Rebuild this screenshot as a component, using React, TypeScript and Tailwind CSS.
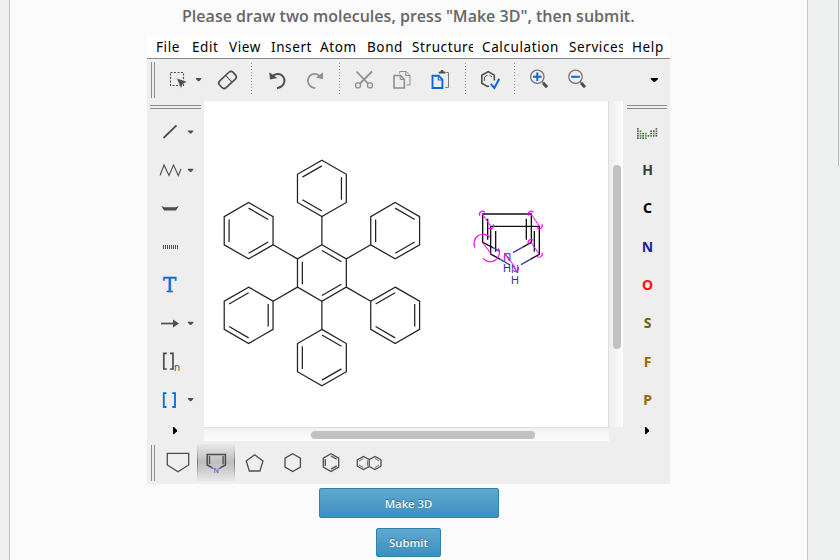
import React from "react";

type Pt = [number, number];

/** Drawing surface whose user units are window coordinates. */
function Art({ x, y, w, h, children }: { x: number; y: number; w: number; h: number; children?: React.ReactNode }) {
  return (
    <svg width={w} height={h} viewBox={`${x} ${y} ${w} ${h}`} className="block shrink-0" fill="none" stroke="#4d4d4d" strokeWidth="1.3">
      {children}
    </svg>
  );
}

const Tool = ({ x, w, children }: { x: number; w: number; children?: React.ReactNode }) => (
  <Art x={x} y={59} w={w} h={42}>{children}</Art>
);

const Separator = ({ x, w, at }: { x: number; w: number; at: number }) => (
  <Tool x={x} w={w}>
    <path d={`M${at + 0.5} 63V95`} stroke="#8d8d8d" strokeWidth="1" strokeDasharray="1 2" />
  </Tool>
);

const Caret = ({ x, y }: { x: number; y: number }) => (
  <path d={`M${x - 2.7} ${y - 1.6}h5.4v1l-2.1 2.2h-1.2l-2.1-2.2z`} fill="#3f5573" stroke="none" />
);

const menus: { label: string; cell: string }[] = [
  { label: "File", cell: "w-[36px]" },
  { label: "Edit", cell: "w-[37px]" },
  { label: "View", cell: "w-[42px]" },
  { label: "Insert", cell: "w-[49px]" },
  { label: "Atom", cell: "w-[47px]" },
  { label: "Bond", cell: "w-[45px]" },
  { label: "Structure", cell: "w-[61px] mr-[9px]" },
  { label: "Calculation", cell: "w-[87px]" },
  { label: "Services", cell: "w-[54px] mr-[9px]" },
  { label: "Help", cell: "w-[36px]" },
];

const elements = [
  { symbol: "H", color: "text-[#3a3a3a]" },
  { symbol: "C", color: "text-black" },
  { symbol: "N", color: "text-[#2222a0]" },
  { symbol: "O", color: "text-[#ff0d0d]" },
  { symbol: "S", color: "text-[#676700]" },
  { symbol: "F", color: "text-[#996600]" },
  { symbol: "P", color: "text-[#996600]" },
];

function hexagon(cx: number, cy: number, r: number): Pt[] {
  return [0, 1, 2, 3, 4, 5].map((i) => {
    const a = (i * Math.PI) / 3;
    return [cx + r * Math.sin(a), cy - r * Math.cos(a)] as Pt;
  });
}

function Ring({ cx, cy, r = 28.2, doubles, inset = 0.2 }: { cx: number; cy: number; r?: number; doubles: number[]; inset?: number }) {
  const outer = hexagon(cx, cy, r);
  const inner = hexagon(cx, cy, r * (1 - inset));
  return (
    <g>
      <polygon points={outer.map((p) => p.join(",")).join(" ")} />
      {doubles.map((i) => {
        const a = inner[i];
        const b = inner[(i + 1) % 6];
        return <line key={i} x1={a[0]} y1={a[1]} x2={b[0]} y2={b[1]} />;
      })}
    </g>
  );
}

function HexaphenylBenzene() {
  const c: Pt = [321.9, 273];
  const near = hexagon(c[0], c[1], 28.2);
  const far = hexagon(c[0], c[1], 56.4);
  const centers = hexagon(c[0], c[1], 84.6);
  const doubles = [[5, 1, 3], [0, 2, 4], [5, 1, 3], [0, 2, 4], [5, 1, 3], [0, 2, 4]];
  return (
    <g stroke="#222" strokeWidth="1.25">
      <Ring cx={c[0]} cy={c[1]} doubles={[0, 2, 4]} />
      {centers.map((p, i) => (
        <g key={i}>
          <Ring cx={p[0]} cy={p[1]} doubles={doubles[i]} />
          <line x1={near[i][0]} y1={near[i][1]} x2={far[i][0]} y2={far[i][1]} />
        </g>
      ))}
    </g>
  );
}

/** Half circles around two paired atoms, joined by a dotted link. */
function AtomPair({ a, b, r = 9 }: { a: Pt; b: Pt; r?: number }) {
  const dx = r * 0.83;
  const dy = r * 0.55;
  return (
    <g>
      <path d={`M${a[0] - dx} ${a[1] + dy}A${r} ${r} 0 0 1 ${a[0] + dx} ${a[1] - dy}`} />
      <path d={`M${b[0] - dx} ${b[1] + dy}A${r} ${r} 0 0 0 ${b[0] + dx} ${b[1] - dy}`} />
      <path d={`M${a[0]} ${a[1]}L${b[0]} ${b[1]}`} strokeDasharray="7 1.5" />
    </g>
  );
}

function OverlappingPyrroles() {
  return (
    <g transform="translate(465 200) scale(0.33333)" strokeWidth="4">
      <g stroke="#111">
        <path d="M84 143L53 127V42H199V127L172 142M68 56V119M184 56V119" />
        <path d="M106 178L77 162V79H223V163L196 178M92 93V155M208 93V155" />
      </g>
      <g stroke="#3b3ba8">
        <path d="M84 143L104 154M172 142L144 158M106 178L135 195M196 178L168 194" />
      </g>
      <g fill="#3030a2" stroke="none" fontFamily="Liberation Sans, Arial, sans-serif" fontSize="33">
        <text x="115" y="182">N</text>
        <text x="114" y="217">H</text>
        <text x="138" y="220">N</text>
        <text x="138" y="252">H</text>
      </g>
      <g stroke="#f0f" strokeWidth="3.4">
        <AtomPair a={[52, 42]} b={[77, 78]} />
        <AtomPair a={[198, 42]} b={[223, 78]} />
        <AtomPair a={[198, 127]} b={[223, 163]} />
        <AtomPair a={[127, 169]} b={[152, 206]} />
        <AtomPair a={[53, 128]} b={[77, 160]} r={27.5} />
      </g>
    </g>
  );
}

function TopToolbar() {
  return (
    <div className="flex h-[42px]">
      <Tool x={147} w={13}><path d="M151.5 62V98M154.5 62V98" stroke="#8c8c8c" strokeWidth="1" /></Tool>
      <Tool x={160} w={50}>
        <path d="M170.5 72.5H183.5V85.5H170.5Z" strokeDasharray="2 1.5" strokeWidth="1.1" />
        <path d="M176.7 78.2L187 81.8L182.8 83.9L181 88.6Z" fill="#4d4d4d" stroke="#eee" strokeWidth=".4" />
        <Caret x={198.6} y={79.6} />
      </Tool>
      <Tool x={210} w={35}>
        <g transform="rotate(-43 227.5 80)" strokeWidth="1.6">
          <rect x="218.3" y="75.3" width="18.5" height="9.4" rx="3" />
          <path d="M229.3 75.5V84.5" strokeWidth="1" />
        </g>
      </Tool>
      <Separator x={245} w={15} at={251} />
      <Tool x={260} w={37}>
        <path d="M272 76.5C275 73.2 280.5 73 283 76.5C286.5 81.5 283.3 87 277 88.2" strokeWidth="2" />
        <path d="M269.3 72.3L270 79.5L277.3 78Z" fill="#4d4d4d" stroke="none" />
      </Tool>
      <Tool x={297} w={36}>
        <path d="M320.3 76.5C317.3 73.2 311.8 73 309.3 76.5C306 81.5 309 87 315.3 88.2" stroke="#8f8f8f" strokeWidth="1.7" />
        <path d="M323 72.3L323 79.3L316 77.6Z" fill="#8f8f8f" stroke="none" />
      </Tool>
      <Separator x={333} w={13} at={339} />
      <Tool x={346} w={37}>
        <g stroke="#8f8f8f">
          <path d="M356.5 71.5L368 83.5M372 71.5L360 83.5" strokeWidth="1.8" />
          <circle cx="358" cy="85.4" r="2.5" />
          <circle cx="370" cy="85.4" r="2.5" />
        </g>
      </Tool>
      <Tool x={383} w={38}>
        <g stroke="#8f8f8f">
          <path d="M394 75.5H400.5L404.3 79.3V88H394Z" strokeWidth="1.6" />
          <path d="M400.2 75V79.5H404.5M399.6 73.6V71.5H406L410 75.3V85H406.4M405.7 71.5V75.5H410" strokeWidth="1" />
        </g>
      </Tool>
      <Tool x={421} w={38}>
        <path d="M446.2 72.5H448.5V87.5H445.3" stroke="#777" strokeWidth="1" />
        <path d="M438.7 73.5V71.7H440.4C440.6 69.5 443.6 69.5 443.8 71.7H445.5V73.5Z" fill="#4d4d4d" stroke="none" />
        <path d="M432.5 75.7H438.7L442.4 79.7V88H432.5Z" stroke="#0b68dc" strokeWidth="1.9" />
        <path d="M438.3 76V80H442.3" stroke="#0b68dc" strokeWidth="1.1" />
      </Tool>
      <Separator x={459} w={13} at={465} />
      <Tool x={472} w={36}>
        <path d="M489 86L487.5 86.4L481.8 83.3V75.2L488.2 71.6L494.3 75.1V80.5" strokeWidth="1.6" />
        <path d="M484.4 81V77L487.6 75.1M489.4 75.2L492 77" strokeWidth="1" />
        <path d="M490.8 84L494.4 88L499.2 78.8" stroke="#0b68dc" strokeWidth="2" />
      </Tool>
      <Separator x={508} w={12} at={514} />
      <Tool x={520} w={38}>
        <circle cx="537.3" cy="76.8" r="6.7" stroke="#777" />
        <path d="M533 76.8H541.6M537.3 72.5V81.1" stroke="#0b68dc" strokeWidth="2" />
        <path d="M542.5 82L543.5 83" /><path d="M543.2 83L547 87.2" strokeWidth="3" />
      </Tool>
      <Tool x={558} w={39}>
        <circle cx="575.5" cy="76.8" r="6.7" stroke="#777" />
        <path d="M571.2 76.8H579.8" stroke="#0b68dc" strokeWidth="2" />
        <path d="M580.5 82L581.5 83" /><path d="M581.2 83L585 87.2" strokeWidth="3" />
      </Tool>
      <Tool x={597} w={73}><path d="M650.8 78H658V79L655 82H653.8L650.8 79Z" fill="#000" stroke="none" /></Tool>
    </div>
  );
}

function LeftTools() {
  return (
    <div className="flex w-[57px] flex-col bg-[#eeeeee]">
      <Art x={147} y={101} w={57} h={11}><path d="M150 105.5H201M150 108.5H201" stroke="#8c8c8c" strokeWidth="1" /></Art>
      <Art x={147} y={112} w={57} h={39}><path d="M163.5 138L176.5 125.3" strokeWidth="1.8" /><Caret x={190.6} y={132} /></Art>
      <Art x={147} y={151} w={57} h={38}><path d="M160 175.5L164 165L169 175.5L173.5 165L178.3 175.5L181 169" strokeWidth="1.1" /><Caret x={190.6} y={170.3} /></Art>
      <Art x={147} y={189} w={57} h={38}><path d="M161.3 206L164.5 207.3H175.5L178.8 206L176 210.5H164Z" fill="#4d4d4d" stroke="none" /></Art>
      <Art x={147} y={227} w={57} h={39}><path d="M163 247H178.2" strokeWidth="4" strokeDasharray="1 1" /></Art>
      <div className="flex h-[38px] items-center pl-[16px] font-['DejaVu_Serif',serif] text-[20px] leading-none text-[#0b68dc] [-webkit-text-stroke:0.4px_#0b68dc]"><span className="h-[20px] w-[14px] leading-[21px]">T</span></div>
      <Art x={147} y={304} w={57} h={38}><path d="M161 323.5H174" strokeWidth="1.7" /><path d="M173 319.5L179 323.5L173 327.5Z" fill="#4d4d4d" stroke="none" /><Caret x={190.6} y={323.3} /></Art>
      <Art x={147} y={342} w={57} h={39}>
        <path d="M166.8 353.3H163.8V369H166.8M170 353.3H173V369H170" strokeWidth="1.7" />
        <text x="174" y="371" fill="#4d4d4d" stroke="none" fontSize="10" fontFamily="Open Sans, sans-serif">n</text>
      </Art>
      <Art x={147} y={381} w={57} h={38}><path d="M166.5 393.2H163.8V407H166.5M172.3 393.2H175V407H172.3" stroke="#0b68dc" strokeWidth="1.8" /><Caret x={190.6} y={399.7} /></Art>
      <Art x={147} y={419} w={57} h={22}><path d="M173 427V434.2H174L177 431.2V430L174 427Z" fill="#000" stroke="none" /></Art>
    </div>
  );
}

// Dot matrix of the periodic table: 1 is a dark cell, 2 a green one.
const periodicDots = ["1......1", "12...112", "1212.121", "12121211", "1112...."];

function RightTools() {
  return (
    <div className="flex w-[47px] flex-col bg-[#eeeeee]">
      <Art x={623} y={101} w={47} h={11}><path d="M627 105.5H667M627 108.5H667" stroke="#8c8c8c" strokeWidth="1" /></Art>
      <Art x={623} y={112} w={47} h={39}>
        <g stroke="none">
          {periodicDots.map((row, r) =>
            row.split("").map((d, c) =>
              d === "." ? null : <rect key={`${r}-${c}`} x={637 + c * 2.65} y={128.2 + r * 2.3} width="1.7" height="1.5" fill={d === "2" ? "#38921c" : "#505050"} />
            )
          )}
        </g>
      </Art>
      <div className="flex h-[268px] flex-col pl-[2px]">
        {elements.map((e) => (
          <div key={e.symbol} className={`flex h-[38.3px] shrink-0 items-center justify-center font-['Noto_Sans',sans-serif] text-[14px] leading-[19px] font-bold ${e.color}`}>
            <span className="-mt-px">{e.symbol}</span>
          </div>
        ))}
      </div>
      <Art x={623} y={419} w={47} h={22}><path d="M645 427V434.2H646L649 431.2V430L646 427Z" fill="#000" stroke="none" /></Art>
    </div>
  );
}

function TemplateBar() {
  return (
    <div className="flex h-[43px] py-[3px]">
      <Art x={147} y={444} w={13} h={37}><path d="M151.5 445V481M154.5 445V481" stroke="#8c8c8c" strokeWidth="1" /></Art>
      <Art x={160} y={444} w={37} h={37}><path d="M167.3 453.4H188.7V465L178 471.8L167.3 465Z" /></Art>
      <div className="flex w-[38px] bg-linear-to-b from-[#e8e8e8] via-[#bdbdbd] to-[#e8e8e8]">
        <Art x={197} y={444} w={38} h={37}>
          <defs>
            <linearGradient id="edge" x1="0" y1="444" x2="0" y2="481" gradientUnits="userSpaceOnUse">
              <stop offset="0" stopColor="#eee" /><stop offset=".5" stopColor="#777" /><stop offset="1" stopColor="#eee" />
            </linearGradient>
          </defs>
          <path d="M197 444h1v37h-1zM234 444h1v37h-1z" fill="url(#edge)" stroke="none" />
          <path d="M212 467.7L207.2 465V454.4H225.4V465L220.6 467.7" strokeWidth="1.5" />
          <path d="M209.5 456V464.3M223.1 456V464.3" />
          <path d="M210.8 467L213.5 468.6M221.8 467L219.2 468.6" stroke="#5555b5" />
          <text x="213.7" y="472.5" fill="#4444ad" stroke="none" fontSize="7" fontFamily="Liberation Sans, Arial, sans-serif">N</text>
        </Art>
      </div>
      <Art x={235} y={444} w={39} h={37}><path d="M254.6 454.7L263 461L259.9 471H249.4L246.2 461Z" /></Art>
      <Art x={274} y={444} w={38} h={37}><Ring cx={292.7} cy={462.6} r={8.9} doubles={[]} /></Art>
      <Art x={312} y={444} w={38} h={37}><Ring cx={331} cy={462.6} r={8.9} doubles={[0, 2, 4]} inset={0.26} /></Art>
      <Art x={350} y={444} w={38} h={37}>
        <path d="M369.2 459.5V466.5L363.5 469.5L357.3 466.2V459.8L363.5 456.5L369.2 459.5L375 456.5L381 459.8V466.2L375 469.5L369.2 466.5" />
        <path d="M359 465L363.3 467.5M359 461L363.3 458.5M367.4 460.5V465.5M375 458.5L379.2 461M375 467.5L379.2 465" strokeWidth=".8" />
      </Art>
    </div>
  );
}

export default function App() {
  return (
    <div className="flex h-[560px] w-[840px] overflow-hidden bg-[#eff1f1] font-['Open_Sans',sans-serif]">
      <div className="w-[9px]" />
      <main className="flex w-[799px] flex-col items-center border-x border-[#c6c6c6] bg-[#fbfbfb]">
        <h1 className="h-[36px] w-[453px] whitespace-nowrap text-[16px] leading-[32px] font-semibold tracking-[0.02px] text-[#666]">Please draw two molecules, press "Make 3D", then submit.</h1>
        <section className="flex w-[523px] flex-col bg-[#eeeeee]">
          <nav className="flex h-[23px] border-b border-[#8a8a8a] bg-white pl-[9px] font-['Noto_Sans',sans-serif] text-[13.5px] leading-[23px] tracking-[0.6px] text-black">
            {menus.map((m) => (
              <span key={m.label} className={`shrink-0 overflow-hidden whitespace-nowrap ${m.cell}`}>{m.label}</span>
            ))}
          </nav>
          <TopToolbar />
          <div className="flex h-[340px]">
            <LeftTools />
            <div className="flex w-[405px] flex-col">
              <div className="h-[327px] border-r border-b border-[#dedede] bg-white">
                <Art x={204} y={101} w={404} h={326}>
                  <HexaphenylBenzene />
                  <OverlappingPyrroles />
                </Art>
              </div>
              <div className="flex h-[13px] items-center bg-linear-to-b from-[#f1f1f1] to-[#fdfdfd] pl-[107px]">
                <div className="h-[8px] w-[224px] rounded-full bg-[#c1c1c1]" />
              </div>
            </div>
            <div className="flex w-[14px] flex-col">
              <div className="flex h-[326px] justify-center bg-linear-to-r from-[#ededed] to-[#fdfdfd] pt-[64px] pl-px">
                <div className="h-[184px] w-[8px] rounded-full bg-[#c1c1c1]" />
              </div>
            </div>
            <RightTools />
          </div>
          <TemplateBar />
        </section>
        <button className="mt-[4px] h-[30px] w-[180px] rounded-[2px] border border-[#2f82ab] bg-linear-to-b from-[#5fa9d0] to-[#3b90bf] text-[11.3px] leading-[29px] font-semibold text-[#f2f6f8] [text-shadow:0_-1px_1px_#00000059]">Make 3D</button>
        <button className="mt-[10px] h-[29px] w-[65px] rounded-[2px] border border-[#2f82ab] bg-linear-to-b from-[#5fa9d0] to-[#3b90bf] text-[11.3px] leading-[28px] font-semibold text-[#f2f6f8] [text-shadow:0_-1px_1px_#00000059]">Submit</button>
      </main>
      <div className="flex w-[32px] justify-end">
        <div className="mr-px h-[166px] w-px bg-[#bcbcbc]" />
      </div>
    </div>
  );
}
